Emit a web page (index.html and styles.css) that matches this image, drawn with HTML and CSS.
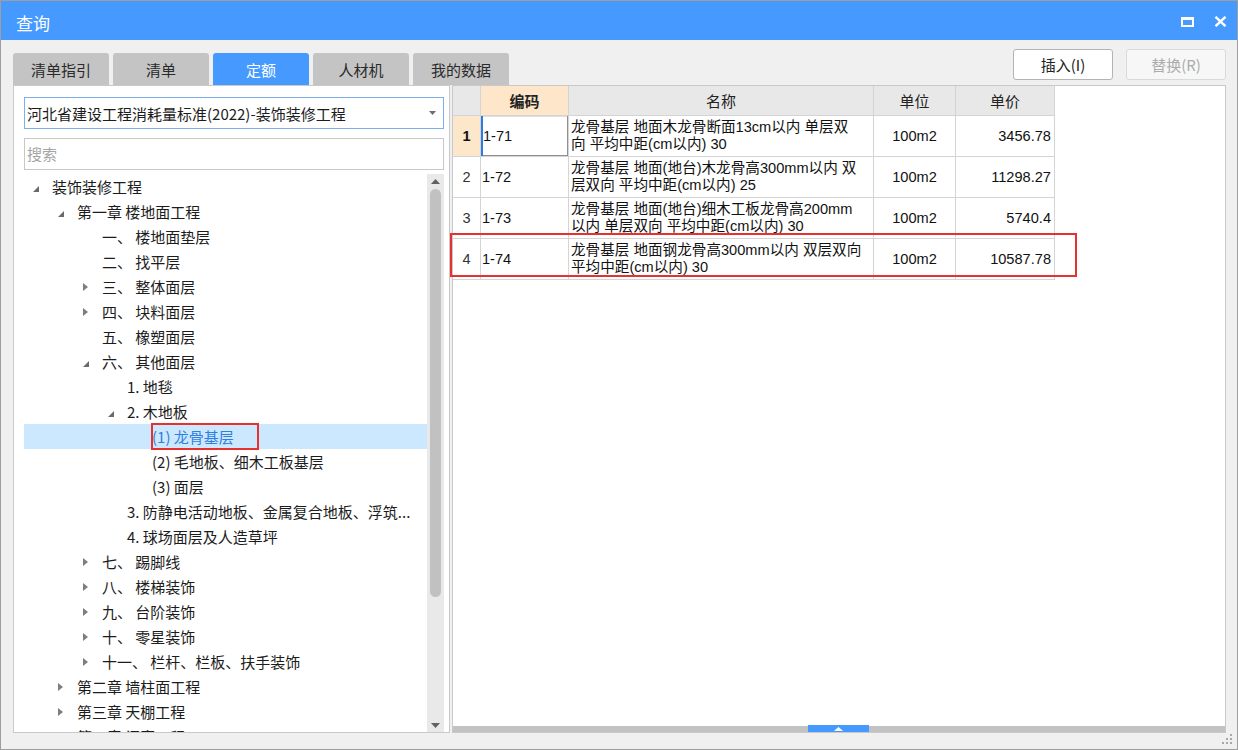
FILE: index.html
```html
<!DOCTYPE html>
<html lang="zh-CN">
<head>
<meta charset="utf-8">
<title>查询</title>
<link rel="stylesheet" href="styles.css">
</head>
<body>
<div class="window">
  <div class="titlebar">
    <span class="title">查询</span>
    <div class="winctrls">
      <svg class="ic-max" width="13" height="10" viewBox="0 0 13 10"><rect x="1" y="1.5" width="11" height="7.5" fill="none" stroke="#fff" stroke-width="2"/><rect x="0" y="0" width="13" height="3" fill="#fff"/></svg>
      <svg class="ic-close" width="13" height="11" viewBox="0 0 13 11"><path d="M1.5 0.8L11.5 10.2M11.5 0.8L1.5 10.2" stroke="#fff" stroke-width="2.4" fill="none"/></svg>
    </div>
  </div>
  <div class="toolbar">
    <div class="tabs">
      <div class="tab">清单指引</div>
      <div class="tab">清单</div>
      <div class="tab active">定额</div>
      <div class="tab">人材机</div>
      <div class="tab">我的数据</div>
    </div>
    <div class="actions">
      <button class="btn">插入(I)</button>
      <button class="btn disabled">替换(R)</button>
    </div>
  </div>
  <div class="main">
    <div class="left">
      <div class="select">
        <span class="select-text">河北省建设工程消耗量标准(2022)-装饰装修工程</span>
        <svg class="select-arrow" width="7" height="4" viewBox="0 0 7 4"><path d="M0 0H7L3.5 4Z"/></svg>
      </div>
      <div class="search">搜索</div>
      <div class="tree">
        <div class="rows">
          <div class="node l0"><span class="tg"><svg class="ex" width="6" height="6" viewBox="0 0 6 6"><path d="M6 0V6H0Z"/></svg></span><span class="lb">装饰装修工程</span></div>
          <div class="node l1"><span class="tg"><svg class="ex" width="6" height="6" viewBox="0 0 6 6"><path d="M6 0V6H0Z"/></svg></span><span class="lb">第一章 楼地面工程</span></div>
          <div class="node l2"><span class="tg"></span><span class="lb">一、 楼地面垫层</span></div>
          <div class="node l2"><span class="tg"></span><span class="lb">二、 找平层</span></div>
          <div class="node l2"><span class="tg"><svg class="co" width="5" height="8" viewBox="0 0 5 8"><path d="M0 0L5 4L0 8Z"/></svg></span><span class="lb">三、 整体面层</span></div>
          <div class="node l2"><span class="tg"><svg class="co" width="5" height="8" viewBox="0 0 5 8"><path d="M0 0L5 4L0 8Z"/></svg></span><span class="lb">四、 块料面层</span></div>
          <div class="node l2"><span class="tg"></span><span class="lb">五、 橡塑面层</span></div>
          <div class="node l2"><span class="tg"><svg class="ex" width="6" height="6" viewBox="0 0 6 6"><path d="M6 0V6H0Z"/></svg></span><span class="lb">六、 其他面层</span></div>
          <div class="node l3"><span class="tg"></span><span class="lb">1. 地毯</span></div>
          <div class="node l3"><span class="tg"><svg class="ex" width="6" height="6" viewBox="0 0 6 6"><path d="M6 0V6H0Z"/></svg></span><span class="lb">2. 木地板</span></div>
          <div class="node l4 sel"><span class="tg"></span><span class="lb">(1) 龙骨基层</span><span class="mark"></span></div>
          <div class="node l4"><span class="tg"></span><span class="lb">(2) 毛地板、细木工板基层</span></div>
          <div class="node l4"><span class="tg"></span><span class="lb">(3) 面层</span></div>
          <div class="node l3"><span class="tg"></span><span class="lb">3. 防静电活动地板、金属复合地板、浮筑...</span></div>
          <div class="node l3"><span class="tg"></span><span class="lb">4. 球场面层及人造草坪</span></div>
          <div class="node l2"><span class="tg"><svg class="co" width="5" height="8" viewBox="0 0 5 8"><path d="M0 0L5 4L0 8Z"/></svg></span><span class="lb">七、 踢脚线</span></div>
          <div class="node l2"><span class="tg"><svg class="co" width="5" height="8" viewBox="0 0 5 8"><path d="M0 0L5 4L0 8Z"/></svg></span><span class="lb">八、 楼梯装饰</span></div>
          <div class="node l2"><span class="tg"><svg class="co" width="5" height="8" viewBox="0 0 5 8"><path d="M0 0L5 4L0 8Z"/></svg></span><span class="lb">九、 台阶装饰</span></div>
          <div class="node l2"><span class="tg"><svg class="co" width="5" height="8" viewBox="0 0 5 8"><path d="M0 0L5 4L0 8Z"/></svg></span><span class="lb">十、 零星装饰</span></div>
          <div class="node l2"><span class="tg"><svg class="co" width="5" height="8" viewBox="0 0 5 8"><path d="M0 0L5 4L0 8Z"/></svg></span><span class="lb">十一、 栏杆、栏板、扶手装饰</span></div>
          <div class="node l1"><span class="tg"><svg class="co" width="5" height="8" viewBox="0 0 5 8"><path d="M0 0L5 4L0 8Z"/></svg></span><span class="lb">第二章 墙柱面工程</span></div>
          <div class="node l1"><span class="tg"><svg class="co" width="5" height="8" viewBox="0 0 5 8"><path d="M0 0L5 4L0 8Z"/></svg></span><span class="lb">第三章 天棚工程</span></div>
          <div class="node l1"><span class="tg"><svg class="co" width="5" height="8" viewBox="0 0 5 8"><path d="M0 0L5 4L0 8Z"/></svg></span><span class="lb">第四章 门窗工程</span></div>
        </div>
        <div class="vscroll">
          <div class="arr up"><svg width="9" height="5" viewBox="0 0 9 5"><path d="M0 5H9L4.5 0Z"/></svg></div>
          <div class="thumb"></div>
          <div class="arr down"><svg width="9" height="5" viewBox="0 0 9 5"><path d="M0 0H9L4.5 5Z"/></svg></div>
        </div>
      </div>
    </div>
    <div class="right">
      <div class="grid">
        <div class="c h"></div>
        <div class="c h hcode">编码</div>
        <div class="c h">名称</div>
        <div class="c h">单位</div>
        <div class="c h">单价</div>

        <div class="c num cur">1</div>
        <div class="c code focus">1-71</div>
        <div class="c name">龙骨基层 地面木龙骨断面13cm以内 单层双<br>向 平均中距(cm以内) 30</div>
        <div class="c unit">100m2</div>
        <div class="c price">3456.78</div>

        <div class="c num">2</div>
        <div class="c code">1-72</div>
        <div class="c name">龙骨基层 地面(地台)木龙骨高300mm以内 双<br>层双向 平均中距(cm以内) 25</div>
        <div class="c unit">100m2</div>
        <div class="c price">11298.27</div>

        <div class="c num">3</div>
        <div class="c code">1-73</div>
        <div class="c name">龙骨基层 地面(地台)细木工板龙骨高200mm<br>以内 单层双向 平均中距(cm以内) 30</div>
        <div class="c unit">100m2</div>
        <div class="c price">5740.4</div>

        <div class="c num">4</div>
        <div class="c code">1-74</div>
        <div class="c name">龙骨基层 地面钢龙骨高300mm以内 双层双向<br>平均中距(cm以内) 30</div>
        <div class="c unit">100m2</div>
        <div class="c price">10587.78</div>
      </div>
      <div class="hsplit"><div class="handle"><svg width="9" height="4" viewBox="0 0 9 4"><path d="M0 4H9L4.5 0Z" fill="#fff"/></svg></div></div>
      <div class="row-mark"></div>
    </div>
  </div>
  <svg class="grip" width="11" height="11" viewBox="0 0 11 11">
    <rect x="8" y="1" width="2" height="2"/>
    <rect x="4" y="5" width="2" height="2"/><rect x="8" y="5" width="2" height="2"/>
    <rect x="0" y="9" width="2" height="2"/><rect x="4" y="9" width="2" height="2"/><rect x="8" y="9" width="2" height="2"/>
  </svg>
</div>
</body>
</html>
```

FILE: styles.css
```css
* { box-sizing: border-box; }
html, body { margin: 0; padding: 0; }
body {
  width: 1238px;
  height: 750px;
  overflow: hidden;
  background: #ffffff;
  font-family: "Noto Sans CJK SC", "Microsoft YaHei", sans-serif;
  color: #1c1c1c;
}
.window {
  position: relative;
  width: 1238px;
  height: 750px;
  border: 1px solid #9e9e9e;
  background: #f0f0f0;
  display: flex;
  flex-direction: column;
}
.titlebar {
  height: 39px;
  flex: none;
  background: #4599ff;
  display: flex;
  align-items: center;
  justify-content: space-between;
  padding: 0 10px 0 15px;
}
.title {
  color: #fff;
  font-size: 17px;
  line-height: 20px;
  margin-top: 5px;
}
.winctrls {
  display: flex;
  align-items: center;
  gap: 20px;
  margin-top: 2px;
}

.toolbar {
  height: 45px;
  flex: none;
  display: flex;
  justify-content: space-between;
  padding: 0 11px 0 12px;
}
.tabs {
  display: flex;
  gap: 4px;
  align-self: flex-end;
}
.tab {
  width: 96px;
  height: 32px;
  background: #c4c4c4;
  border-radius: 3px 3px 0 0;
  font-size: 15px;
  color: #2a2a2a;
  display: flex;
  align-items: center;
  justify-content: center;
}
.tab.active { background: #4599ff; color: #fff; }
.actions {
  display: flex;
  gap: 13px;
  padding-top: 9px;
}
.btn {
  width: 100px;
  height: 31px;
  border: 1px solid #b4b4b4;
  border-radius: 3px;
  background: #fff;
  font-family: "Noto Sans CJK SC", sans-serif;
  font-size: 15px;
  color: #222;
  padding: 0;
}
.btn.disabled {
  border-color: #d9d9d9;
  background: #f7f7f7;
  color: #acacac;
}

.main {
  height: 648px;
  flex: none;
  display: flex;
  gap: 2px;
  padding: 0 11px 0 12px;
}
.left {
  width: 437px;
  flex: none;
  background: #fff;
  border: 1px solid #c9c9c9;
  padding: 11px 5px 0 10px;
  display: flex;
  flex-direction: column;
}
.select {
  height: 32px;
  flex: none;
  border: 1px solid #7bb0ee;
  display: flex;
  align-items: center;
  padding: 0 7px 0 2px;
  font-size: 15px;
  color: #1c1c1c;
}
.select-text { white-space: nowrap; }
.select-arrow { margin-left: auto; fill: #6e6e6e; }
.search {
  height: 32px;
  flex: none;
  margin-top: 9px;
  border: 1px solid #c8c8c8;
  padding-left: 2px;
  font-size: 15px;
  line-height: 30px;
  color: #a5a5a5;
}
.tree {
  flex: 1;
  margin-top: 4px;
  display: flex;
  overflow: hidden;
}
.rows {
  flex: 1;
  overflow: hidden;
}
.node {
  position: relative;
  height: 25px;
  display: flex;
  align-items: center;
  font-size: 15px;
  line-height: 25px;
  white-space: nowrap;
  color: #1c1c1c;
}
.node.l0 { padding-left: 4px; }
.node.l1 { padding-left: 29px; }
.node.l2 { padding-left: 54px; }
.node.l3 { padding-left: 79px; }
.node.l4 { padding-left: 104px; }
.tg {
  width: 24px;
  height: 25px;
  flex: none;
  display: flex;
  align-items: center;
  padding-left: 5px;
}
.tg .ex { fill: #6a6a6a; margin-top: 4px; }
.tg .co { fill: #7e7e7e; }
.node.sel { background: #cce8ff; }
.node.sel .lb { color: #2f7fe0; }
.mark {
  position: absolute;
  left: 127px;
  top: -1px;
  width: 108px;
  height: 27px;
  border: 2px solid #e8302f;
}
.vscroll {
  width: 17px;
  flex: none;
  background: #e9e9e9;
  display: flex;
  flex-direction: column;
  align-items: center;
}
.arr {
  height: 15px;
  flex: none;
  display: flex;
  align-items: center;
  justify-content: center;
  fill: #616161;
}
.arr.down { margin-top: auto; height: 13px; }
.thumb {
  width: 11px;
  height: 408px;
  flex: none;
  background: #c1c1c1;
  border-radius: 6px;
}

.right {
  flex: 1;
  position: relative;
  background: #fff;
  border: 1px solid #c9c9c9;
  display: flex;
  flex-direction: column;
}
.grid {
  display: grid;
  grid-template-columns: 28px 88px 305px 82px 99px;
  grid-template-rows: 30px repeat(4, 41px);
  width: 602px;
  font-family: "Liberation Sans", "Noto Sans CJK SC", sans-serif;
}
.c {
  border-right: 1px solid #d4d4d4;
  border-bottom: 1px solid #d4d4d4;
  display: flex;
  align-items: center;
  font-size: 14.6px;
  color: #111;
  white-space: nowrap;
  overflow: hidden;
}
.c.h {
  background: #e8e8e8;
  justify-content: center;
  color: #222;
  font-size: 15px;
}
.c.h.hcode { background: #fde6c9; font-weight: 700; }
.c.num { justify-content: center; color: #333; }
.c.num.cur { background: #fde7cb; font-weight: 700; color: #111; }
.c.code { padding-left: 1px; }
.c.focus {
  box-shadow: inset 2px 0 0 #2b7be3, inset -1px -1px 0 #8f8f8f, inset 0 1px 0 #e0e0e0;
  padding-left: 2px;
}
.c.name {
  padding-left: 2px;
  line-height: 17px;
}
.c.unit { justify-content: center; }
.c.price { justify-content: flex-end; padding-right: 3px; }
.hsplit {
  margin-top: auto;
  height: 6px;
  flex: none;
  background: #c2c2c2;
  position: relative;
}
.handle {
  position: absolute;
  left: 355px;
  top: -1px;
  width: 61px;
  height: 7px;
  background: #4599ff;
  display: flex;
  align-items: center;
  justify-content: center;
}
.row-mark {
  position: absolute;
  left: -3px;
  top: 147px;
  width: 627px;
  height: 44px;
  border: 2px solid #e8302f;
}
.grip {
  position: absolute;
  left: 1221px;
  top: 732px;
  fill: #a8a8a8;
}
```
